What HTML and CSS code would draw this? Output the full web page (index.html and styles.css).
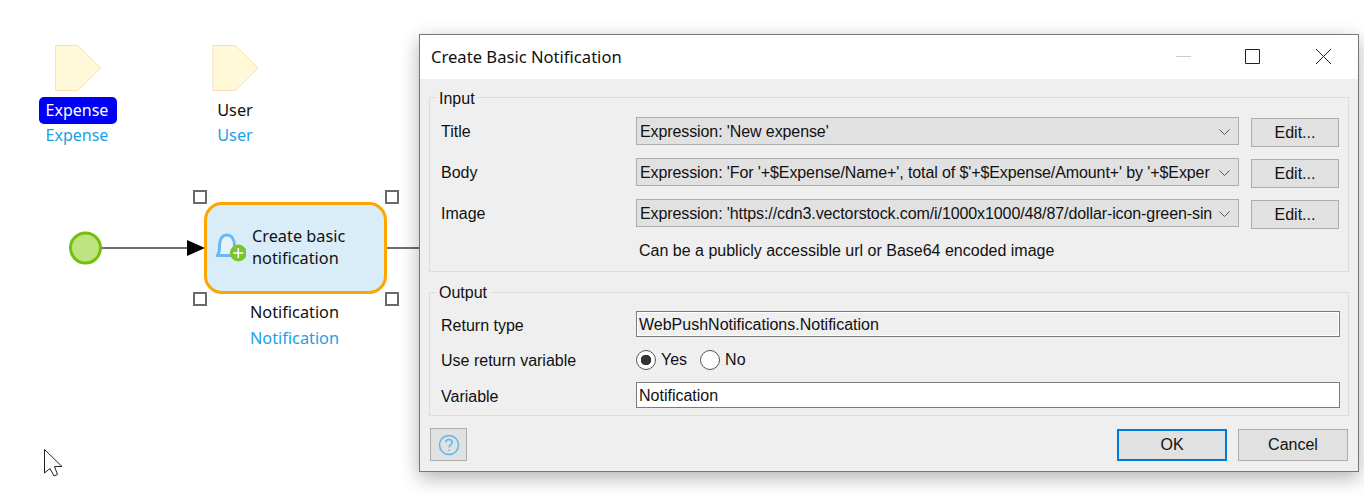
FILE: index.html
```html
<!DOCTYPE html>
<html lang="en">
<head>
    <meta charset="UTF-8">
    <meta name="viewport" content="width=device-width, initial-scale=1.0">
    <title>Create Basic Notification</title>
    <link rel="stylesheet" href="styles.css">
</head>
<body>
    <div class="canvas">
        <!-- microflow diagram, free canvas -->
        <svg class="flow" width="420" height="495" viewBox="0 0 420 495">
            <path class="param" d="M55.5 45.5H78L100.5 68L78 90.5H55.5Z"/>
            <path class="param" d="M213 45.5H235.5L258 68L235.5 90.5H213Z"/>
            <line class="edge" x1="101" y1="248" x2="190" y2="248"/>
            <line class="edge" x1="387" y1="248" x2="420" y2="248"/>
            <path d="M187 240L205 248L187 256Z"/>
            <circle class="start" cx="85.5" cy="248" r="15"/>
            <path class="cursor" d="M44.5 449.5V473L50 468.5L54 476L57.5 474.5L54.5 466.5H62Z"/>
        </svg>

        <div class="param-label label-expense">
            <span class="badge">Expense</span>
            <span class="var-name">Expense</span>
        </div>
        <div class="param-label label-user">
            <span class="plain">User</span>
            <span class="var-name">User</span>
        </div>

        <div class="activity">
            <svg class="bell" width="32" height="32" viewBox="0 0 32 32">
                <path class="bell-body" d="M3.2 23.5C5 22 5.5 19 5.5 14C5.5 7 8.5 3 13 3C17.5 3 20.5 7 20.5 14C20.5 19 21 22 22.8 23.5Z"/>
                <circle class="bell-plus" cx="24.3" cy="21" r="8.4"/>
                <path class="bell-cross" d="M24.3 16V26M19.3 21H29.3"/>
            </svg>
            <span class="activity-text">Create basic notification</span>
        </div>
        <span class="handle h-tl"></span>
        <span class="handle h-tr"></span>
        <span class="handle h-bl"></span>
        <span class="handle h-br"></span>

        <div class="param-label label-result">
            <span class="plain">Notification</span>
            <span class="var-name">Notification</span>
        </div>
    </div>

    <div class="dialog">
        <div class="titlebar">
            <span class="dialog-title">Create Basic Notification</span>
            <div class="win-btns">
                <svg class="min-btn" width="15" height="15" viewBox="0 0 15 15"><path class="win-min" d="M0 7.5H15"/></svg>
                <svg class="max-btn" width="15" height="15" viewBox="0 0 15 15"><path class="win-icon" d="M.5 .5H14.5V14.5H.5Z"/></svg>
                <svg width="15" height="15" viewBox="0 0 15 15"><path class="win-icon" d="M0 0L15 15M15 0L0 15"/></svg>
            </div>
        </div>

        <div class="dialog-body">
            <fieldset class="group input-group">
                <legend>Input</legend>
                <div class="grid">
                    <label>Title</label>
                    <div class="select"><span>Expression: 'New expense'</span><svg class="chev" width="11" height="6" viewBox="0 0 11 6"><path d="M.5 .5L5.5 5.5L10.5 .5"/></svg></div>
                    <button class="btn edit">Edit...</button>

                    <label>Body</label>
                    <div class="select"><span>Expression: 'For '+$Expense/Name+', total of $'+$Expense/Amount+' by '+$Exper</span><svg class="chev" width="11" height="6" viewBox="0 0 11 6"><path d="M.5 .5L5.5 5.5L10.5 .5"/></svg></div>
                    <button class="btn edit">Edit...</button>

                    <label>Image</label>
                    <div class="select"><span>Expression: 'https://cdn3.vectorstock.com/i/1000x1000/48/87/dollar-icon-green-sin</span><svg class="chev" width="11" height="6" viewBox="0 0 11 6"><path d="M.5 .5L5.5 5.5L10.5 .5"/></svg></div>
                    <button class="btn edit">Edit...</button>

                    <p class="hint">Can be a publicly accessible url or Base64 encoded image</p>
                </div>
            </fieldset>

            <fieldset class="group output-group">
                <legend>Output</legend>
                <div class="grid-out">
                    <label>Return type</label>
                    <div class="field readonly">WebPushNotifications.Notification</div>

                    <label class="radio-label">Use return variable</label>
                    <div class="radios">
                        <span class="radio checked"></span><span class="radio-text">Yes</span>
                        <span class="radio"></span><span class="radio-text">No</span>
                    </div>

                    <label>Variable</label>
                    <div class="field">Notification</div>
                </div>
            </fieldset>

            <div class="footer">
                <button class="help" aria-label="Help">
                    <svg width="22" height="22" viewBox="0 0 22 22">
                        <circle cx="11" cy="11" r="9.5"/>
                        <path d="M7.8 8.5C7.8 6.5 9.3 5.5 11 5.5C12.8 5.5 14.2 6.7 14.2 8.3C14.2 10.5 11 10.8 11 13.5"/>
                        <path d="M11 15.5V17"/>
                    </svg>
                </button>
                <div class="actions">
                    <button class="btn ok">OK</button>
                    <button class="btn cancel">Cancel</button>
                </div>
            </div>
        </div>
    </div>
</body>
</html>
```

FILE: styles.css
```css
html, body {
    margin: 0;
    height: 495px;
    overflow: hidden;
    background-color: #fff;
}
body {
    position: relative;
    width: 1364px;
    color: #111;
    font-family: "Liberation Sans", Arial, sans-serif;
    font-size: 16px;
}

/* diagram */
.canvas {
    position: absolute;
    left: 0;
    top: 0;
    width: 420px;
    height: 495px;
    font-family: "Noto Sans", sans-serif;
    font-size: 16.3px;
}
.flow {
    position: absolute;
    left: 0;
    top: 0;
}
.param {
    fill: #fff8d9;
    stroke: #fbdfae;
}
.edge {
    stroke: #6e6e6e;
    stroke-width: 2;
}
.start {
    fill: #bde480;
    stroke: #76bf0a;
    stroke-width: 3;
}
.cursor {
    fill: #fff;
    stroke: #222;
}
.param-label {
    position: absolute;
    display: flex;
    flex-direction: column;
    align-items: center;
    transform: translateX(-50%);
    white-space: nowrap;
}
.label-expense { left: 78px; top: 97px; font-size: 16px; }
.label-user { left: 235px; top: 97px; }
.label-result { left: 294.5px; top: 299px; }
.badge, .plain, .var-name {
    line-height: 27px;
    height: 27px;
}
.badge {
    box-sizing: border-box;
    width: 78px;
    padding-right: 2px;
    text-align: center;
    border-radius: 5px;
    background-color: #0000f5;
    color: #fff;
}
.plain {
    color: #111;
}
.var-name {
    margin-top: -2px;
    color: #1ba1e6;
}
.label-expense .var-name {
    margin-right: 2px;
}
.label-result .var-name {
    margin-top: -1px;
}
.activity {
    position: absolute;
    left: 204px;
    top: 202px;
    width: 177px;
    height: 86px;
    display: flex;
    align-items: center;
    border: 3px solid #ffa500;
    border-radius: 18px;
    background-color: #d9edf8;
}
.bell {
    margin-left: 7px;
    flex: none;
}
.bell-body {
    fill: #e6f3fb;
    stroke: #66b9f6;
    stroke-width: 3;
    stroke-linejoin: round;
}
.bell-plus {
    fill: #7cc52e;
}
.bell-cross {
    stroke: #fff;
    stroke-width: 1.5;
}
.activity-text {
    margin-left: 6px;
    padding-bottom: 2px;
    width: 120px;
    line-height: 22px;
}
.handle {
    position: absolute;
    width: 10px;
    height: 10px;
    border: 2px solid #6a6a6a;
    background-color: #fff;
}
.h-tl { left: 193px; top: 190px; }
.h-tr { left: 385px; top: 190px; }
.h-bl { left: 193px; top: 292px; }
.h-br { left: 385px; top: 292px; }

/* dialog window */
.dialog {
    position: absolute;
    left: 419px;
    top: 34px;
    width: 938px;
    height: 436px;
    border: 1px solid #777;
    background-color: #efefef;
    box-shadow: 0 6px 18px rgba(0, 0, 0, .3);
}
.titlebar {
    box-sizing: border-box;
    height: 44px;
    display: flex;
    align-items: center;
    justify-content: space-between;
    padding: 0 27px 2px 11px;
    background-color: #fff;
}
.dialog-title {
    font-family: "Noto Sans", sans-serif;
    font-size: 16.6px;
}
.win-btns {
    display: flex;
    margin-top: 1px;
}
.min-btn {
    margin-right: 54px;
}
.max-btn {
    margin-right: 56px;
}
.win-min {
    stroke: #ccc;
}
.win-icon {
    fill: none;
    stroke: #222;
}
.dialog-body {
    padding: 8px 9px 0 9px;
}
.group {
    box-sizing: border-box;
    margin: 0;
    padding: 0;
    min-width: 0;
    border: 1px solid #dcdcdc;
    font-family: inherit;
}
.group legend {
    margin-left: 6px;
    padding: 2px 3px 0;
    line-height: 18px;
}
.input-group legend {
    padding-top: 3px;
    line-height: 17px;
}
.input-group {
    height: 185px;
}
.output-group {
    height: 134px;
    margin-top: 10px;
}
.grid {
    display: grid;
    grid-template-columns: 183px 603px 88px;
    grid-auto-rows: 28px;
    column-gap: 12px;
    row-gap: 13px;
    padding: 10px 0 0 11px;
}
.grid label {
    align-self: center;
    padding-top: 2px;
}
.grid-out label {
    align-self: center;
    padding-top: 4px;
}
.grid-out .radio-label {
    padding-top: 2px;
}
.select {
    display: flex;
    align-items: center;
    justify-content: space-between;
    box-sizing: border-box;
    padding: 1px 8px 0 3px;
    border: 1px solid #adadad;
    background-color: #e1e1e1;
}
.select span {
    letter-spacing: -.1px;
    white-space: nowrap;
}
.chev {
    flex: none;
    fill: none;
    stroke: #555;
}
.btn {
    box-sizing: border-box;
    border: 1px solid #adadad;
    background-color: #e1e1e1;
    color: #111;
    font-family: inherit;
    font-size: 16px;
    padding: 0;
}
.edit {
    height: 29px;
    margin-top: 1px;
}
.hint {
    grid-column: 2 / 4;
    margin: 0;
    padding: 1px 0 0 3px;
    line-height: 20px;
}
.grid-out {
    display: grid;
    grid-template-columns: 195px 704px;
    grid-template-rows: 26px 45px 26px;
    padding: 9px 0 0 11px;
}
.field {
    box-sizing: border-box;
    padding: 1px 0 0 2px;
    line-height: 23px;
    border: 1px solid #7a7a7a;
    background-color: #fff;
}
.readonly {
    background-color: #efefef;
    box-shadow: inset 0 0 0 1px #fff;
}
.radios {
    display: flex;
    align-items: center;
}
.radio {
    width: 18px;
    height: 18px;
    border: 1px solid #555;
    border-radius: 50%;
    background-color: #fff;
}
.radio.checked {
    background: radial-gradient(circle, #333 0 5px, #fff 5.5px);
}
.radio-text {
    margin: 0 13px 0 5px;
}
.footer {
    display: flex;
    justify-content: space-between;
    align-items: flex-start;
    margin-top: 12px;
    padding: 0 1px;
}
.help {
    width: 37px;
    height: 33px;
    display: flex;
    align-items: center;
    justify-content: center;
    padding: 0;
    border: 1px solid #adadad;
    background-color: #e1e1e1;
}
.help svg {
    fill: none;
    stroke: #5cb6f2;
    stroke-width: 1.5;
}
.actions {
    display: flex;
    gap: 11px;
}
.ok, .cancel {
    width: 110px;
    height: 32px;
    margin-top: 1px;
}
.ok {
    border: 2px solid #0078d7;
}
```
